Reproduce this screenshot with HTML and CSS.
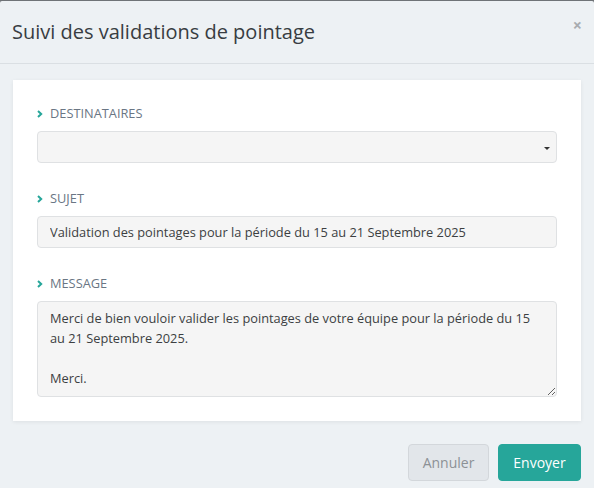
FILE: index.html
```html
<!DOCTYPE html>
<html lang="fr">
<head>
<meta charset="utf-8">
<title>Suivi des validations de pointage</title>
<link rel="stylesheet" href="styles.css">
</head>
<body>
<div class="modal">
  <div class="modal-header">
    <h1 class="modal-title">Suivi des validations de pointage</h1>
    <button class="close" type="button">×</button>
  </div>
  <div class="modal-body">
    <div class="card">
      <div class="group">
        <label class="label"><svg class="chev" width="6" height="8" viewBox="0 0 6 8"><polyline points="1,1 4.2,4 1,7" fill="none" stroke="#26a69a" stroke-width="2"/></svg>DESTINATAIRES</label>
        <div class="select"><span class="caret"></span></div>
      </div>
      <div class="group">
        <label class="label"><svg class="chev" width="6" height="8" viewBox="0 0 6 8"><polyline points="1,1 4.2,4 1,7" fill="none" stroke="#26a69a" stroke-width="2"/></svg>SUJET</label>
        <input class="input" type="text" value="Validation des pointages pour la période du 15 au 21 Septembre 2025">
      </div>
      <div class="group">
        <label class="label"><svg class="chev" width="6" height="8" viewBox="0 0 6 8"><polyline points="1,1 4.2,4 1,7" fill="none" stroke="#26a69a" stroke-width="2"/></svg>MESSAGE</label>
        <textarea class="textarea">Merci de bien vouloir valider les pointages de votre équipe pour la période du 15 au 21 Septembre 2025.

Merci.</textarea>
      </div>
    </div>
  </div>
  <div class="modal-footer">
    <button class="btn btn-cancel" type="button">Annuler</button>
    <button class="btn btn-send" type="button">Envoyer</button>
  </div>
</div>
</body>
</html>
```
FILE: styles.css
```css
html, body {
  margin: 0;
  padding: 0;
}
body {
  background: #6f7377;
  font-family: "Open Sans", "Liberation Sans", sans-serif;
  overflow: hidden;
}
.modal {
  margin-top: 1px;
  background: #edf1f4;
  height: 487px;
  border-radius: 2px 2px 0 0;
}
.modal-header {
  height: 62px;
  border-bottom: 1px solid #dadfe3;
  display: flex;
  align-items: center;
  justify-content: space-between;
  padding: 0 12px 0 12px;
  position: relative;
}
.modal-title {
  margin: 0;
  font-weight: 400;
  font-size: 20px;
  color: #383d42;
  padding-bottom: 2px;
}
.close {
  position: absolute;
  right: 12px;
  top: 14px;
  background: none;
  border: 0;
  padding: 0;
  font-family: "Open Sans", "Liberation Sans", sans-serif;
  font-size: 16px;
  font-weight: 700;
  color: #a8acb0;
  line-height: 20px;
}
.modal-body {
  padding: 16px 13px 0 13px;
}
.card {
  background: #fff;
  padding: 24px 24px 24px 24px;
  box-shadow: 0 1px 4px rgba(0, 0, 0, 0.07);
  display: flex;
  flex-direction: column;
  gap: 26px;
}
.group {
  display: flex;
  flex-direction: column;
}
.label {
  display: flex;
  align-items: center;
  font-size: 12.8px;
  line-height: 18px;
  color: #6a7684;
  margin-bottom: 9px;
}
.chev {
  margin-right: 7px;
  margin-top: 1px;
}
.select, .input, .textarea {
  box-sizing: border-box;
  width: 100%;
  background: #f5f5f5;
  border: 1px solid #dfe1e3;
  border-radius: 4px;
  font-family: "Open Sans", "Liberation Sans", sans-serif;
  font-size: 12.8px;
  color: #3c3f42;
}
.select {
  height: 32px;
  position: relative;
}
.caret {
  position: absolute;
  right: 6px;
  top: 15px;
  width: 0;
  height: 0;
  border-left: 3px solid transparent;
  border-right: 3px solid transparent;
  border-top: 3px solid #333;
}
.input {
  height: 32px;
  padding: 0 12px;
  outline: none;
}
.textarea {
  height: 96px;
  padding: 6px 12px;
  line-height: 20px;
  resize: vertical;
  outline: none;
  display: block;
}
.modal-footer {
  display: flex;
  justify-content: flex-end;
  gap: 9px;
  padding: 23px 13px 0 0;
}
.btn {
  height: 37px;
  border-radius: 4px;
  font-family: "Open Sans", "Liberation Sans", sans-serif;
  font-size: 14px;
  padding: 0;
}
.btn-cancel {
  width: 81px;
  background: #e2e6ea;
  border: 1px solid #d3d7db;
  color: #8c9196;
}
.btn-send {
  width: 83px;
  background: #26a69a;
  border: 1px solid #26a69a;
  color: #fff;
}
```
